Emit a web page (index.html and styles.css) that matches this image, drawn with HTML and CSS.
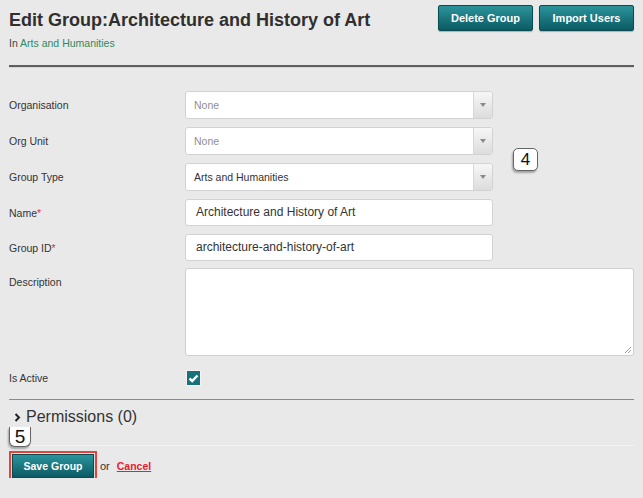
FILE: index.html
```html
<!DOCTYPE html>
<html>
<head>
<meta charset="utf-8">
<link rel="stylesheet" href="styles.css">
</head>
<body>
<div class="page">
  <div class="header">
    <div class="title-block">
      <h1 class="title">Edit Group:Architecture and History of Art</h1>
      <div class="subtitle">In <a class="crumb" href="#">Arts and Humanities</a></div>
    </div>
    <div class="actions">
      <button class="btn">Delete Group</button>
      <button class="btn">Import Users</button>
    </div>
  </div>
  <div class="rule-strong"></div>

  <div class="form">
    <div class="row">
      <label class="label">Organisation</label>
      <div class="select"><span class="select-text muted">None</span><span class="select-arrow"><span class="tri"></span></span></div>
    </div>
    <div class="row">
      <label class="label">Org Unit</label>
      <div class="select"><span class="select-text muted">None</span><span class="select-arrow"><span class="tri"></span></span></div>
      <div class="badge badge-4">4</div>
    </div>
    <div class="row">
      <label class="label">Group Type</label>
      <div class="select"><span class="select-text">Arts and Humanities</span><span class="select-arrow"><span class="tri"></span></span></div>
    </div>
    <div class="row">
      <label class="label">Name<span class="req">*</span></label>
      <div class="input">Architecture and History of Art</div>
    </div>
    <div class="row">
      <label class="label">Group ID<span class="req">*</span></label>
      <div class="input">architecture-and-history-of-art</div>
    </div>
    <div class="row row-top">
      <label class="label label-top">Description</label>
      <div class="textarea"><svg class="grip" width="8" height="8" viewBox="0 0 8 8"><path d="M7 1L1 7M7 4L4 7" stroke="#999" stroke-width="1"/></svg></div>
    </div>
    <div class="row row-active">
      <label class="label">Is Active</label>
      <div class="checkbox"><svg width="11" height="9" viewBox="0 0 11 9"><path d="M1.5 4.5L4.2 7L9.5 1.5" fill="none" stroke="#fff" stroke-width="2.4"/></svg></div>
    </div>
  </div>

  <div class="rule"></div>
  <div class="perm">
    <svg class="chev" width="7" height="9" viewBox="0 0 7 9"><path d="M1.5 1L5 4.5L1.5 8" fill="none" stroke="#222" stroke-width="2"/></svg>
    <span class="perm-text">Permissions (0)</span>
    <div class="badge badge-5">5</div>
  </div>
  <div class="rule-light"></div>
  <div class="footer">
    <button class="btn btn-save">Save Group</button>
    <span class="or">or</span>
    <a class="cancel" href="#">Cancel</a>
  </div>
</div>
</body>
</html>
```

FILE: styles.css
```css
html, body {
  margin: 0;
  padding: 0;
  background: #e9e9e9;
}
body {
  font-family: Arial, "Liberation Sans", sans-serif;
  color: #333;
}
.page {
  padding: 5px 9px 0 9px;
  width: 625px;
}
.header {
  display: flex;
  justify-content: space-between;
  align-items: flex-start;
}
.title {
  margin: 4px 0 0 0;
  font-size: 18px;
  line-height: 22px;
  font-weight: bold;
  color: #2f2f2f;
}
.subtitle {
  margin-top: 5px;
  font-size: 10.5px;
  line-height: 14px;
  color: #444;
}
.crumb {
  color: #2f8a62;
  text-decoration: none;
}
.actions {
  display: flex;
  gap: 6px;
}
.btn {
  height: 26px;
  width: 95px;
  padding: 0;
  border: 1px solid #0a4c54;
  border-radius: 2px;
  background: linear-gradient(#2b939b, #0b5b63);
  color: #fff;
  font-family: Arial, "Liberation Sans", sans-serif;
  font-size: 11px;
  font-weight: bold;
  box-shadow: 0 1px 1px rgba(0,0,0,0.25);
}
.rule-strong {
  margin-top: 15px;
  height: 2px;
  background: #5e5e5e;
  border-bottom: 1px solid #d6d6d6;
}
.form {
  margin-top: 23px;
  display: flex;
  flex-direction: column;
  gap: 8px;
}
.row {
  display: flex;
  align-items: center;
  position: relative;
}
.row-top {
  align-items: flex-start;
  margin-top: -1px;
}
.label {
  width: 176px;
  flex: none;
  font-size: 10.5px;
  color: #333;
}
.label-top {
  padding-top: 8px;
}
.req {
  color: #e0333f;
}
.select {
  width: 308px;
  height: 28px;
  box-sizing: border-box;
  border: 1px solid #d2d2d2;
  border-radius: 3px;
  background: #fff;
  display: flex;
  align-items: center;
  overflow: hidden;
}
.select-text {
  flex: 1;
  padding-left: 8px;
  font-size: 10.5px;
  color: #333;
}
.select-text.muted {
  color: #8f8f8f;
}
.select-arrow {
  width: 18px;
  height: 100%;
  border-left: 1px solid #d8d8d8;
  background: linear-gradient(#f7f7f7, #dcdcdc);
  display: flex;
  align-items: center;
  justify-content: center;
}
.tri {
  width: 0;
  height: 0;
  border-left: 3px solid transparent;
  border-right: 3px solid transparent;
  border-top: 4px solid #8a8a8a;
}
.input {
  width: 308px;
  height: 27px;
  box-sizing: border-box;
  border: 1px solid #d2d2d2;
  border-radius: 3px;
  background: #fff;
  padding-left: 10px;
  font-size: 12px;
  line-height: 25px;
  color: #333;
}
.textarea {
  width: 450px;
  height: 88px;
  box-sizing: border-box;
  border: 1px solid #cfcfcf;
  border-radius: 3px;
  background: #fff;
  position: relative;
}
.grip {
  position: absolute;
  right: 1px;
  bottom: 1px;
}
.row-active {
  margin-top: 6px;
  height: 16px;
}
.checkbox {
  margin-left: 1px;
  width: 15px;
  height: 16px;
  box-sizing: border-box;
  background: #17707a;
  border: 1px solid #f2f2f2;
  display: flex;
  align-items: center;
  justify-content: center;
}
.rule {
  margin-top: 13px;
  height: 1px;
  background: #8a8a8a;
}
.perm {
  margin-top: 8px;
  display: flex;
  align-items: center;
  position: relative;
  height: 18px;
}
.chev {
  margin-left: 5px;
  margin-right: 5px;
}
.perm-text {
  font-size: 16px;
  line-height: 18px;
  color: #333;
}
.badge {
  position: absolute;
  background: #fff;
  border: 1px solid #666;
  border-radius: 5px;
  box-shadow: -1px 2px 2px rgba(0,0,0,0.3);
  color: #111;
  display: flex;
  align-items: center;
  justify-content: center;
  box-sizing: border-box;
}
.badge-4 {
  left: 504px;
  top: 21px;
  width: 25px;
  height: 23px;
  font-size: 17px;
}
.badge-5 {
  left: 0;
  top: 19px;
  width: 22px;
  height: 20px;
  font-size: 19px;
  border-top: none;
  border-radius: 0 0 6px 6px;
}
.rule-light {
  margin-top: 19px;
  height: 1px;
  background: #f3f3f3;
}
.footer {
  margin-top: 8px;
  display: flex;
  align-items: center;
}
.btn-save {
  margin-left: 3px;
  width: 82px;
  height: 24px;
  font-size: 10.5px;
  outline: 2px solid #e4443c;
  outline-offset: 1px;
  border-radius: 0;
}
.or {
  margin-left: 6px;
  font-size: 11px;
  color: #333;
}
.cancel {
  margin-left: 7px;
  font-size: 10.5px;
  font-weight: bold;
  color: #e8202f;
  text-decoration: underline;
}
```
